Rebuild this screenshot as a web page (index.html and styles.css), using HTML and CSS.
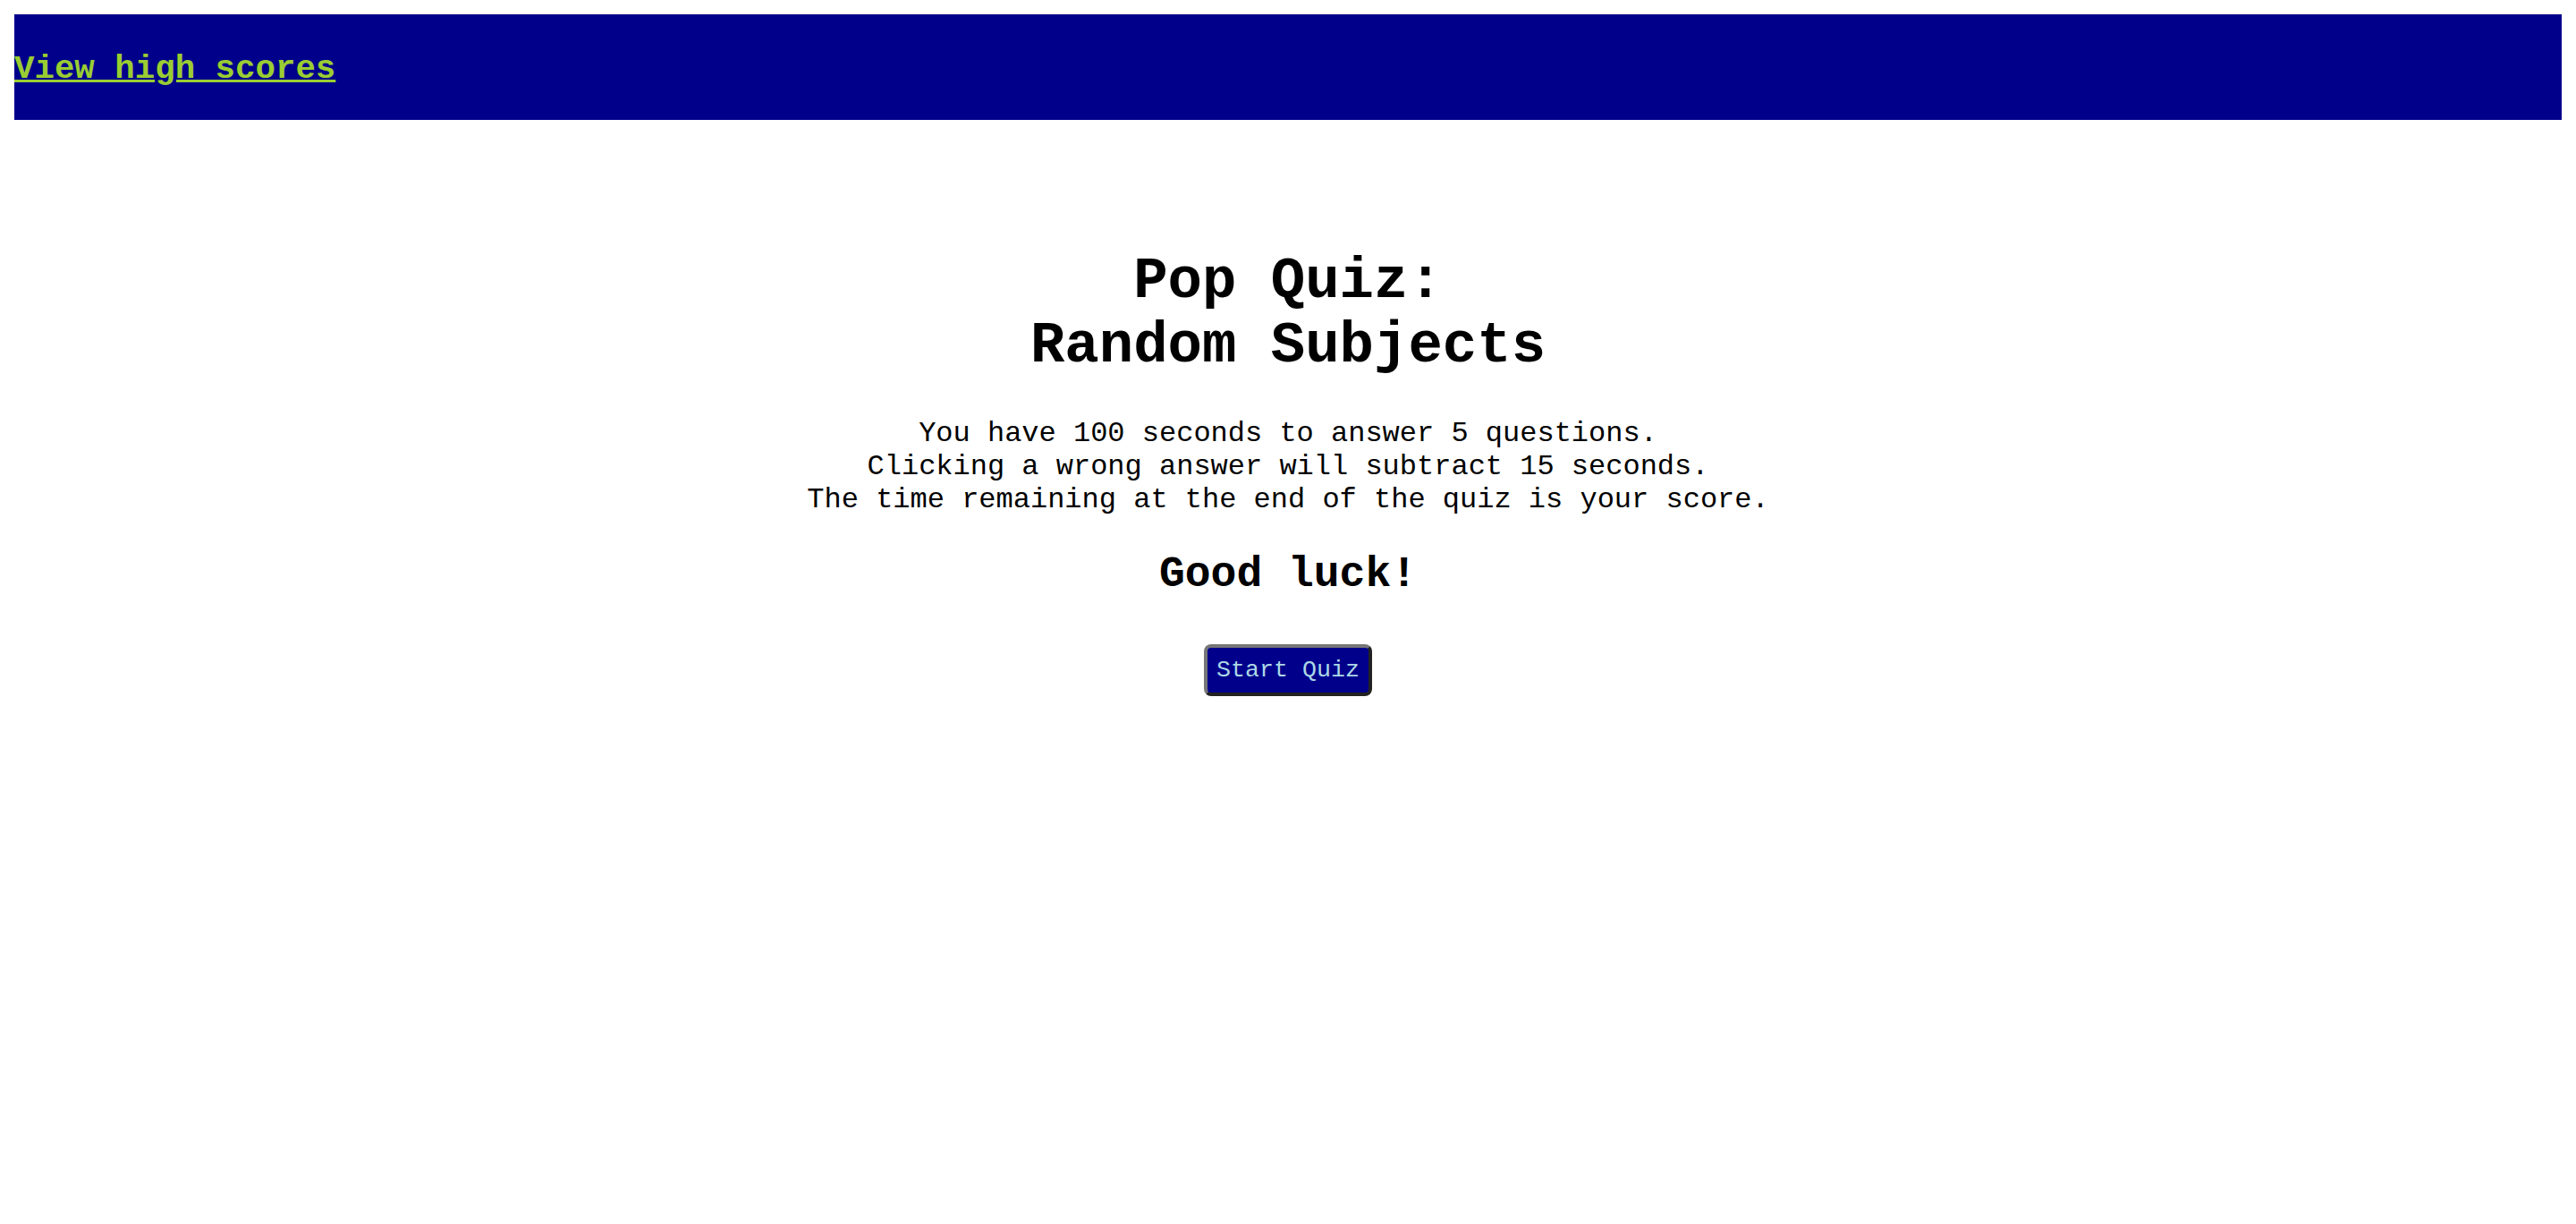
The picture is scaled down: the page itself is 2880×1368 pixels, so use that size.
FILE: index.html
```html
<!DOCTYPE html>
<html>
<head>
<meta charset="utf-8">
<link rel="stylesheet" href="styles.css">
</head>
<body>
<header class="topbar">
  <h3 class="scores"><a href="#" class="scores-link">View high scores</a></h3>
</header>
<main class="intro">
  <h1 class="title">Pop Quiz:<br>Random Subjects</h1>
  <p class="rules">You have 100 seconds to answer 5 questions.<br>Clicking a wrong answer will subtract 15 seconds.<br>The time remaining at the end of the quiz is your score.</p>
  <h2 class="luck">Good luck!</h2>
  <div class="actions"><button class="start-btn">Start Quiz</button></div>
</main>
</body>
</html>
```
FILE: styles.css
```css
html, body {
  background: #ffffff;
}
body {
  margin: 16px;
  font-family: "Courier New", "Liberation Mono", monospace;
  color: #000;
}
.topbar {
  background: #00008b;
  display: flow-root;
  height: 118px;
  box-sizing: border-box;
}
.scores {
  font-size: 37.44px;
  font-weight: bold;
  margin: 40px 0 35px;
}
.scores-link {
  color: #9acd32;
  text-decoration: underline;
}
.intro {
  text-align: center;
  padding-top: 102px;
}
.title {
  font-size: 64px;
  font-weight: bold;
  margin: 43px 0;
}
.rules {
  font-size: 32px;
  margin: 32px 0;
}
.luck {
  font-size: 48px;
  font-weight: bold;
  margin: 38px 0 40px;
}
.actions {
  margin-top: 51px;
}
.start-btn {
  font-family: "Courier New", "Liberation Mono", monospace;
  font-size: 26.67px;
  color: #add8e6;
  background: #00008b;
  border: 4px solid;
  border-color: #777 #222 #222 #777;
  border-radius: 8px;
  padding: 10px 10px;
  line-height: normal;
}
```
